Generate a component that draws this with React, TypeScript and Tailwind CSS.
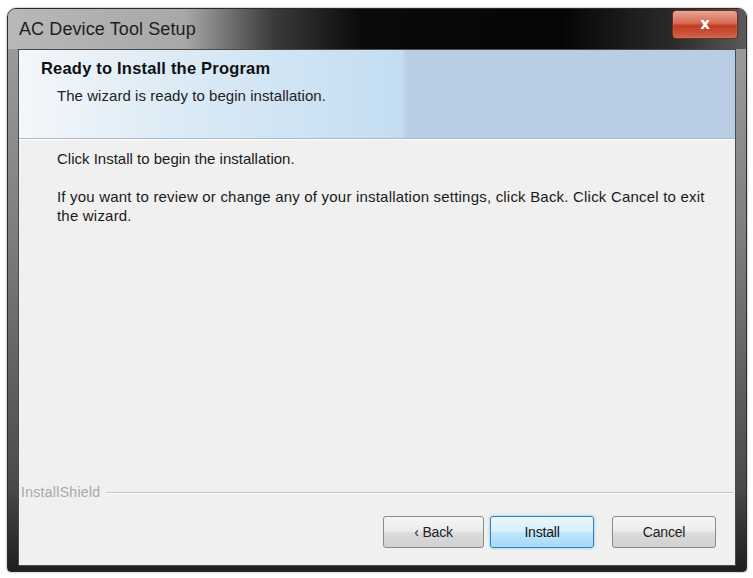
import React from "react";

export default function App() {
  const font = { fontFamily: '"Liberation Sans", Arial, sans-serif' };
  return (
    <div className="w-[753px] h-[578px] bg-white pt-[8px] pl-[7px] overflow-hidden" style={font}>
      <div className="w-[740px] h-[564px] rounded-t-[9px] rounded-b-[4px] border border-[#2a2a2a] bg-[linear-gradient(to_bottom,#a0a0a0,#7e7e7e_40%,#4a4a4a_85%,#1e1e1e)] flex flex-col shadow-[0_0_2px_rgba(0,0,0,0.5)]">
        {/* title bar */}
        <div className="h-[40px] rounded-t-[8px] bg-[linear-gradient(to_right,#b8b8b8_0%,#a8a8a8_24%,#3a3a3a_36%,#0a0a0a_48%,#050505_75%,#2a2a2a_90%,#5a5a5a_100%)] flex items-start justify-between pl-[11px] pr-[8px]">
          <span className="mt-[10px] text-[18px] leading-[20px] text-[#1e1e1e] tracking-[0.1px]">AC Device Tool Setup</span>
          <div className="mt-[1px] w-[66px] h-[29px] rounded-[4px] border border-[#6e2a1e] bg-[linear-gradient(to_bottom,#e8a595_0%,#d66a55_45%,#c23a22_55%,#d0634c_100%)] flex items-center justify-center shadow-[inset_0_0_1px_rgba(255,255,255,0.8)]">
            <span className="text-white font-bold text-[15px] leading-none" style={{ fontFamily: '"DejaVu Sans", sans-serif' }}>x</span>
          </div>
        </div>
        {/* client */}
        <div className="mx-[10px] h-[517px] border border-[#4a4a4a] bg-[#f0f0f0] flex flex-col">
          {/* header */}
          <div className="h-[89px] flex border-b border-[#a8b8c8] shadow-[0_1px_0_#ffffff]">
            <div className="w-[382px] bg-[linear-gradient(to_right,#f4f7fa_0%,#dcebf6_40%,#c4ddf1_100%)] pl-[22px] pt-[8px]">
              <div className="text-[16.5px] font-bold leading-[20px] text-[#111] tracking-[0.2px] whitespace-nowrap">Ready to Install the Program</div>
              <div className="mt-[9px] pl-[16px] text-[15px] leading-[18px] text-[#222] tracking-[0.05px] whitespace-nowrap">The wizard is ready to begin installation.</div>
            </div>
            <div className="w-[6px] bg-[linear-gradient(to_right,#c4ddf1,#bccfe5)]"></div>
            <div className="flex-1 bg-[#b9cde5]"></div>
          </div>
          {/* body */}
          <div className="flex-1 flex flex-col pl-[38px] pt-[10px] text-[#1a1a1a]">
            <div className="text-[15px] leading-[19px]">Click Install to begin the installation.</div>
            <div className="mt-[19px] w-[660px] text-[15px] leading-[19px] tracking-[0.2px]">
              If you want to review or change any of your installation settings, click Back. Click Cancel to exit the wizard.
            </div>
          </div>
          {/* installshield line */}
          <div className="flex items-center pr-[2px] h-[20px] mt-[3px]">
            <span className="text-[14px] text-[#a8a8a8] tracking-[0.3px] pl-[2px]">InstallShield</span>
            <div className="flex-1 ml-[6px] h-0 border-t border-[#c4c4c4] shadow-[0_1px_0_#ffffff]"></div>
          </div>
          <div className="h-[63px] flex items-start justify-end pr-[19px] pt-[14px]">
            <button className="w-[101px] h-[32px] rounded-[3px] border border-[#8a8a8a] bg-[linear-gradient(to_bottom,#f6f6f6_0%,#ebebeb_48%,#dcdcdc_52%,#d0d0d0_100%)] text-[14px] text-[#222] tracking-[-0.2px]">
              ‹ Back
            </button>
            <button className="ml-[6px] w-[104px] h-[32px] rounded-[3px] border border-[#3c7fb1] bg-[linear-gradient(to_bottom,#eaf6fd_0%,#d9f0fc_48%,#bee6fd_52%,#a7d9f5_100%)] shadow-[0_0_3px_#6ec4ef] text-[14px] text-[#111] tracking-[-0.2px]">
              Install
            </button>
            <button className="ml-[18px] w-[104px] h-[32px] rounded-[3px] border border-[#8a8a8a] bg-[linear-gradient(to_bottom,#f6f6f6_0%,#ebebeb_48%,#dcdcdc_52%,#d0d0d0_100%)] text-[14px] text-[#222] tracking-[-0.2px]">
              Cancel
            </button>
          </div>
        </div>
      </div>
    </div>
  );
}
